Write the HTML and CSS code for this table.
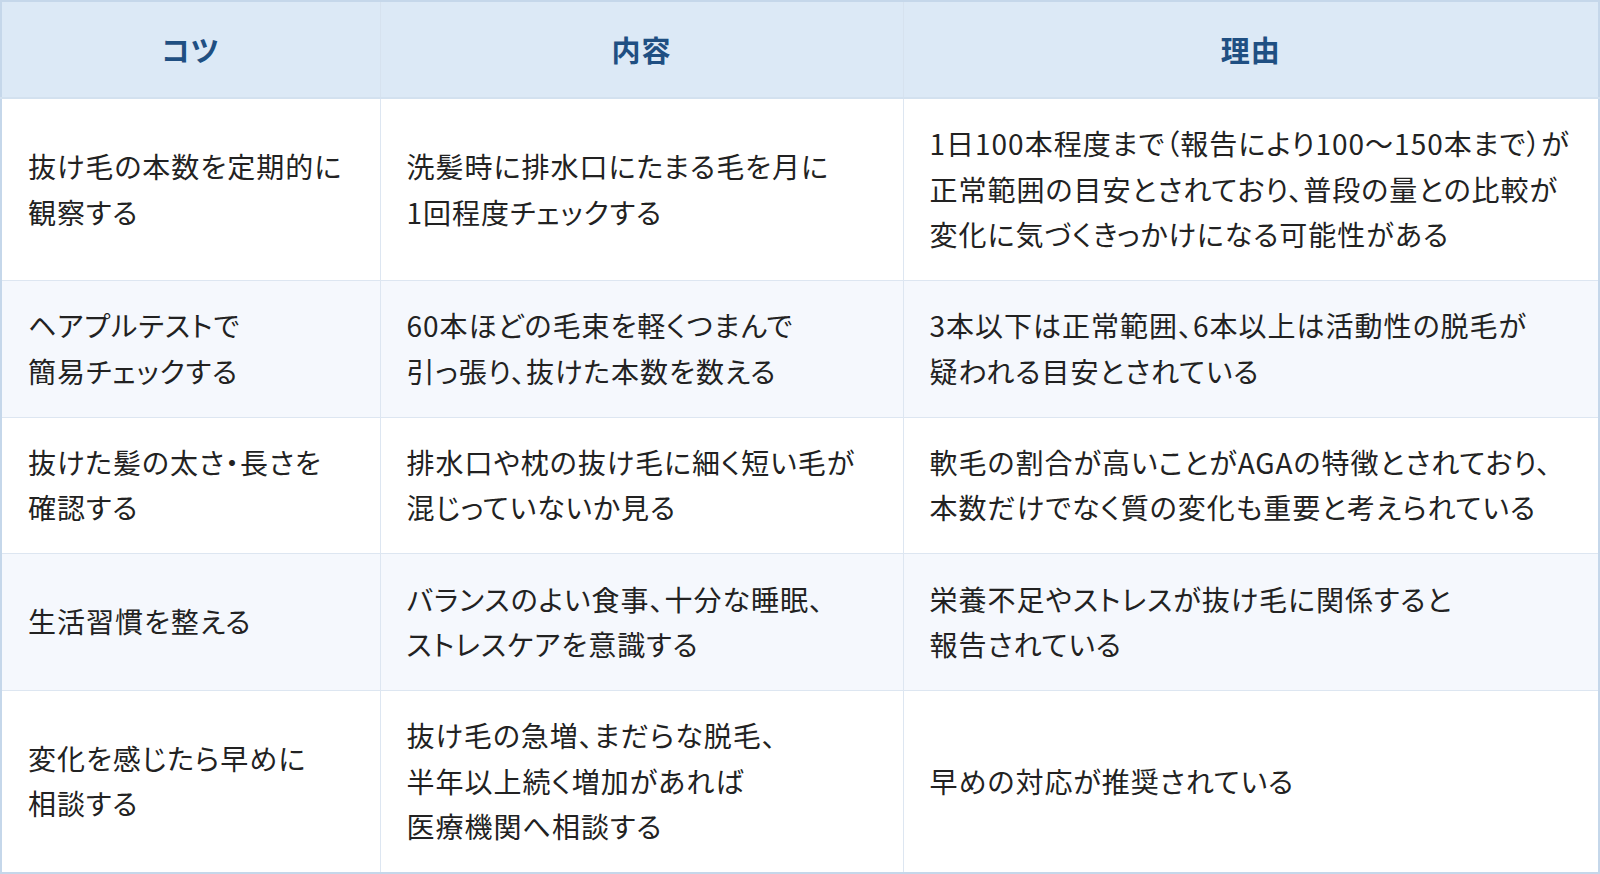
FILE: index.html
```html
<!DOCTYPE html>
<html lang="ja">
<head>
<meta charset="utf-8">
<title>抜け毛チェックのコツ</title>
<link rel="stylesheet" href="styles.css">
</head>
<body>
<table class="tips">
  <colgroup>
    <col class="c1">
    <col class="c2">
    <col class="c3">
  </colgroup>
  <thead>
    <tr>
      <th>コツ</th>
      <th>内容</th>
      <th>理由</th>
    </tr>
  </thead>
  <tbody>
    <tr>
      <td>抜け毛の本数を定期的に<br>観察する</td>
      <td>洗髪時に排水口にたまる毛を月に<br>1回程度チェックする</td>
      <td>1日100本程度まで（報告により100〜150本まで）が<br>正常範囲の目安とされており、普段の量との比較が<br>変化に気づくきっかけになる可能性がある</td>
    </tr>
    <tr>
      <td>ヘアプルテストで<br>簡易チェックする</td>
      <td>60本ほどの毛束を軽くつまんで<br>引っ張り、抜けた本数を数える</td>
      <td>3本以下は正常範囲、6本以上は活動性の脱毛が<br>疑われる目安とされている</td>
    </tr>
    <tr>
      <td>抜けた髪の太さ・長さを<br>確認する</td>
      <td>排水口や枕の抜け毛に細く短い毛が<br>混じっていないか見る</td>
      <td>軟毛の割合が高いことがAGAの特徴とされており、<br>本数だけでなく質の変化も重要と考えられている</td>
    </tr>
    <tr>
      <td>生活習慣を整える</td>
      <td>バランスのよい食事、十分な睡眠、<br>ストレスケアを意識する</td>
      <td>栄養不足やストレスが抜け毛に関係すると<br>報告されている</td>
    </tr>
    <tr>
      <td>変化を感じたら早めに<br>相談する</td>
      <td>抜け毛の急増、まだらな脱毛、<br>半年以上続く増加があれば<br>医療機関へ相談する</td>
      <td>早めの対応が推奨されている</td>
    </tr>
  </tbody>
</table>
</body>
</html>
```

FILE: styles.css
```css
html, body {
  margin: 0;
  padding: 0;
  background: #ffffff;
}

body {
  font-family: "Noto Sans CJK JP", "Noto Sans", sans-serif;
  color: #222222;
  font-feature-settings: "palt";
}

.tips {
  width: 1600px;
  border-collapse: collapse;
  border: 2px solid #c5d7ea;
  table-layout: fixed;
}

.c1 { width: 379px; }
.c2 { width: 523px; }
.c3 { width: auto; }

.tips th {
  background: #dce9f6;
  color: #1f4f82;
  font-size: 29px;
  font-weight: 700;
  line-height: 45px;
  padding: 25px 26px;
  text-align: center;
  letter-spacing: 1px;
  border-left: 1px solid #d6e2ef;
  border-bottom: 2px solid #d3e1ef;
}

.tips td {
  font-size: 28px;
  font-weight: 400;
  line-height: 45.5px;
  padding: 22.3px 26px;
  vertical-align: middle;
  text-align: left;
  white-space: nowrap;
  border-left: 1px solid #dde6f1;
  border-top: 1px solid #dde6f1;
  letter-spacing: 1px;
}

.tips th:first-child,
.tips td:first-child {
  border-left: none;
}

.tips tbody tr:nth-child(even) td {
  background: #f5f8fd;
}
```
